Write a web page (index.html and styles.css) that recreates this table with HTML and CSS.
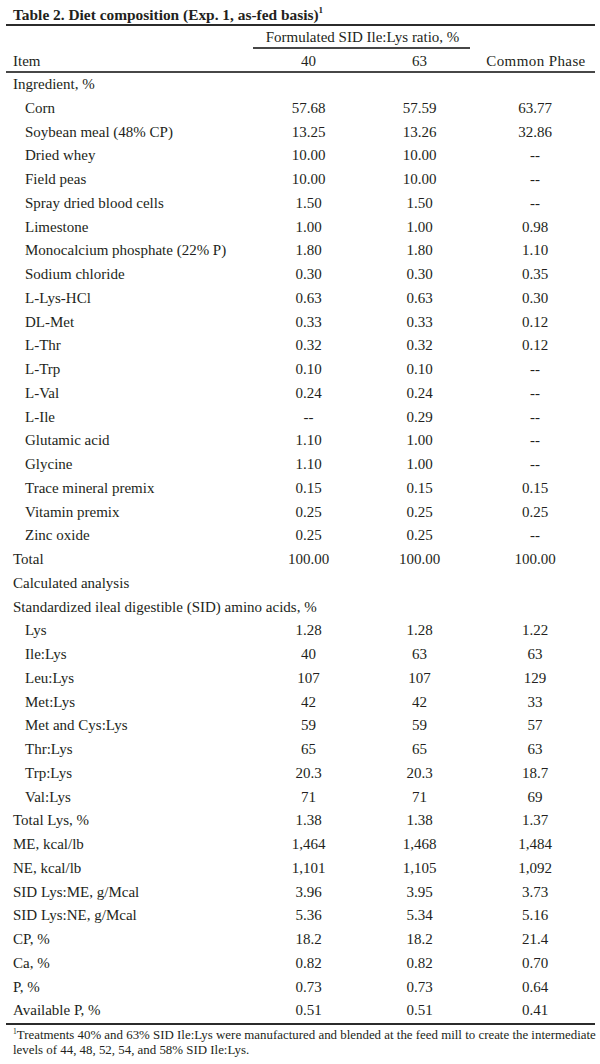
FILE: index.html
```html
<!DOCTYPE html>
<html>
<head>
<meta charset="utf-8">
<link rel="stylesheet" href="styles.css">
</head>
<body>
<div class="title">Table 2. Diet composition (Exp. 1, as-fed basis)<sup>1</sup></div>
<table class="diet">
<colgroup><col class="c-item"><col class="c-num"><col class="c-num"><col class="c-common"></colgroup>
<thead>
<tr class="r1"><th></th><th colspan="2"><div class="span-line">Formulated SID Ile:Lys ratio, %</div></th><th></th></tr>
<tr class="r2"><th class="l">Item</th><th>40</th><th>63</th><th class="wide">Common Phase</th></tr>
</thead>
<tbody>
<tr><td class="l">Ingredient, %</td><td></td><td></td><td></td></tr>
<tr><td class="i">Corn</td><td>57.68</td><td>57.59</td><td>63.77</td></tr>
<tr><td class="i">Soybean meal (48% CP)</td><td>13.25</td><td>13.26</td><td>32.86</td></tr>
<tr><td class="i">Dried whey</td><td>10.00</td><td>10.00</td><td>--</td></tr>
<tr><td class="i">Field peas</td><td>10.00</td><td>10.00</td><td>--</td></tr>
<tr><td class="i">Spray dried blood cells</td><td>1.50</td><td>1.50</td><td>--</td></tr>
<tr><td class="i">Limestone</td><td>1.00</td><td>1.00</td><td>0.98</td></tr>
<tr><td class="i">Monocalcium phosphate (22% P)</td><td>1.80</td><td>1.80</td><td>1.10</td></tr>
<tr><td class="i">Sodium chloride</td><td>0.30</td><td>0.30</td><td>0.35</td></tr>
<tr><td class="i">L-Lys-HCl</td><td>0.63</td><td>0.63</td><td>0.30</td></tr>
<tr><td class="i">DL-Met</td><td>0.33</td><td>0.33</td><td>0.12</td></tr>
<tr><td class="i">L-Thr</td><td>0.32</td><td>0.32</td><td>0.12</td></tr>
<tr><td class="i">L-Trp</td><td>0.10</td><td>0.10</td><td>--</td></tr>
<tr><td class="i">L-Val</td><td>0.24</td><td>0.24</td><td>--</td></tr>
<tr><td class="i">L-Ile</td><td>--</td><td>0.29</td><td>--</td></tr>
<tr><td class="i">Glutamic acid</td><td>1.10</td><td>1.00</td><td>--</td></tr>
<tr><td class="i">Glycine</td><td>1.10</td><td>1.00</td><td>--</td></tr>
<tr><td class="i">Trace mineral premix</td><td>0.15</td><td>0.15</td><td>0.15</td></tr>
<tr><td class="i">Vitamin premix</td><td>0.25</td><td>0.25</td><td>0.25</td></tr>
<tr><td class="i">Zinc oxide</td><td>0.25</td><td>0.25</td><td>--</td></tr>
<tr><td class="l">Total</td><td>100.00</td><td>100.00</td><td>100.00</td></tr>
<tr><td class="l">Calculated analysis</td><td></td><td></td><td></td></tr>
<tr><td class="l" colspan="4">Standardized ileal digestible (SID) amino acids, %</td></tr>
<tr><td class="i">Lys</td><td>1.28</td><td>1.28</td><td>1.22</td></tr>
<tr><td class="i">Ile:Lys</td><td>40</td><td>63</td><td>63</td></tr>
<tr><td class="i">Leu:Lys</td><td>107</td><td>107</td><td>129</td></tr>
<tr><td class="i">Met:Lys</td><td>42</td><td>42</td><td>33</td></tr>
<tr><td class="i">Met and Cys:Lys</td><td>59</td><td>59</td><td>57</td></tr>
<tr><td class="i">Thr:Lys</td><td>65</td><td>65</td><td>63</td></tr>
<tr><td class="i">Trp:Lys</td><td>20.3</td><td>20.3</td><td>18.7</td></tr>
<tr><td class="i">Val:Lys</td><td>71</td><td>71</td><td>69</td></tr>
<tr><td class="l">Total Lys, %</td><td>1.38</td><td>1.38</td><td>1.37</td></tr>
<tr><td class="l">ME, kcal/lb</td><td>1,464</td><td>1,468</td><td>1,484</td></tr>
<tr><td class="l">NE, kcal/lb</td><td>1,101</td><td>1,105</td><td>1,092</td></tr>
<tr><td class="l">SID Lys:ME, g/Mcal</td><td>3.96</td><td>3.95</td><td>3.73</td></tr>
<tr><td class="l">SID Lys:NE, g/Mcal</td><td>5.36</td><td>5.34</td><td>5.16</td></tr>
<tr><td class="l">CP, %</td><td>18.2</td><td>18.2</td><td>21.4</td></tr>
<tr><td class="l">Ca, %</td><td>0.82</td><td>0.82</td><td>0.70</td></tr>
<tr><td class="l">P, %</td><td>0.73</td><td>0.73</td><td>0.64</td></tr>
<tr class="last"><td class="l">Available P, %</td><td>0.51</td><td>0.51</td><td>0.41</td></tr>
</tbody>
</table>
<div class="foot"><span class="line"><sup>1</sup>Treatments 40% and 63% SID Ile:Lys were manufactured and blended at the feed mill to create the intermediate</span><span class="line">levels of 44, 48, 52, 54, and 58% SID Ile:Lys.</span></div>
</body>
</html>
```

FILE: styles.css
```css
html, body {
  margin: 0;
  padding: 0;
  background: #ffffff;
}
body {
  width: 600px;
  height: 1064px;
  overflow: hidden;
  font-family: "Liberation Serif", "Times New Roman", serif;
  color: #231f20;
}
.title {
  box-sizing: border-box;
  height: 24px;
  padding: 5px 0 0 13px;
  font-size: 15.4px;
  line-height: 19px;
  font-weight: bold;
  white-space: nowrap;
}
.title sup {
  font-size: 9px;
  line-height: 0;
  vertical-align: 7px;
}
.diet {
  margin-left: 6px;
  width: 589px;
  table-layout: fixed;
  border-collapse: separate;
  border-spacing: 0;
  font-size: 15px;
}
.c-item { width: 247px; }
.c-num { width: 111px; }
.c-common { width: 120px; }
.diet th {
  font-weight: normal;
  padding: 0;
  text-align: center;
  white-space: nowrap;
}
.r1 th {
  border-top: 2px solid #2b2b2b;
  line-height: 20px;
}
.span-line {
  border-bottom: 2px solid #474747;
  margin-right: 5px;
  padding-top: 1px;
  padding-left: 2px;
  line-height: 20px;
}
.r2 th {
  padding-top: 2px;
  line-height: 20px;
  border-bottom: 2px solid #474747;
}
.r2 th.wide {
  letter-spacing: 0.4px;
  padding-left: 2px;
}
.diet td {
  height: 23.75px;
  line-height: 23.75px;
  padding: 0;
  text-align: center;
  white-space: nowrap;
}
.diet th.l, .diet td.l {
  text-align: left;
  padding-left: 7px;
}
.diet td.i {
  text-align: left;
  padding-left: 19px;
}
.last td {
  border-bottom: 2px solid #2b2b2b;
}
.foot {
  margin-top: 3px;
  padding-left: 13px;
  font-size: 12.9px;
  line-height: 15px;
}
.foot .line {
  display: block;
  white-space: nowrap;
}
.foot sup {
  font-size: 7.5px;
  line-height: 0;
  vertical-align: 5px;
}
```
